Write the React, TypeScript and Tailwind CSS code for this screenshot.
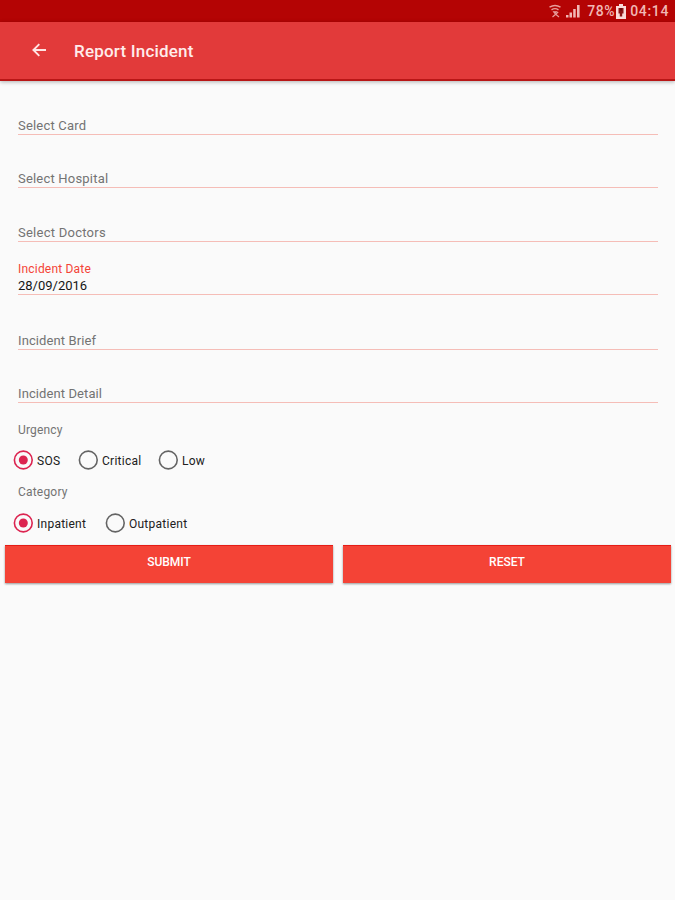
import React from "react";

type FieldProps = { label: string; value?: string; height: string; tracking?: string };

function Field({ label, value, height, tracking = "tracking-[0.2px]" }: FieldProps) {
  return (
    <div className={`flex flex-col justify-end border-b border-[#f5bdb7] ${height}`}>
      {value ? (
        <>
          <span className="text-[12px] leading-[14px] tracking-[0.2px] text-[#f44336]">{label}</span>
          <span className="mt-[2px] mb-[1px] text-[13px] leading-[15px] text-[#151515]">{value}</span>
        </>
      ) : (
        <span className={`mb-[1px] text-[13px] leading-[15px] text-[#737373] ${tracking}`}>{label}</span>
      )}
    </div>
  );
}

function Radio({ label, checked = false, className = "" }: { label: string; checked?: boolean; className?: string }) {
  return (
    <div className={`flex items-center gap-[4px] ${className}`}>
      <svg width="20" height="20" viewBox="0 0 20 20" fill="none" className="shrink-0">
        <circle cx="10.3" cy="10" r="8.9" stroke={checked ? "#dc2450" : "#646464"} strokeWidth="1.6" />
        {checked && <circle cx="10.3" cy="10" r="4.5" fill="#dc2450" />}
      </svg>
      <span className="relative top-[0.5px] text-[12px] leading-[14px] tracking-[0.25px] text-[#202020]">{label}</span>
    </div>
  );
}

function ActionButton({ label }: { label: string }) {
  return (
    <button className="flex h-[38px] flex-1 items-start justify-center border-t border-[#e51c16] bg-[#f44336] pt-[9px] text-[12px] leading-[14px] font-medium text-white shadow-[0_1px_2px_rgba(0,0,0,0.4)]">
      {label}
    </button>
  );
}

export default function App() {
  return (
    <div className="h-[900px] w-[675px] overflow-hidden bg-[#fafafa] font-[Roboto,sans-serif]">
      <div className="flex h-[22px] items-center justify-end bg-[#b40404] pr-[6px] text-[#f1b8b5]">
        <svg width="12" height="16" viewBox="0 0 12 16" fill="none" stroke="currentColor" className="mr-[5px] opacity-85">
          <path d="M.5 4.2Q6 .8 11.5 4.2M2.5 6.8Q6 4.5 9.5 6.8" strokeWidth="1.4" />
          <path d="M4 8.5h4L6 11z" fill="currentColor" strokeWidth=".6" />
          <path d="M3.5 14 9.2 9M7 11.5l3 2.5" strokeWidth="1.2" />
        </svg>
        <svg width="14" height="14" viewBox="0 0 14 14" fill="currentColor" className="mr-[7px]">
          <path d="M0 11h2.5v2.5H0zM3.5 8.5H6v5H3.5zM7.2 5h2.5v8.5H7.2zM11 1h2.6v12.5H11z" />
        </svg>
        <span className="text-[14px] leading-[16px] font-medium tracking-[0.6px]">78%</span>
        <svg width="10" height="15" viewBox="0 0 10 15" className="mr-[4px] ml-[1px]">
          <path d="M3 0h4v2h3v13H0V2h3z" fill="#fadbd8" />
          <path d="M2.5 4h5v5.5H6.2v3H3.8v-3H2.5z" fill="#8d1515" />
          <path d="M4.3 4h1.5v2.5H4.3z" fill="#5d0909" />
        </svg>
        <span className="text-[14px] leading-[16px] font-medium tracking-[0.65px]">04:14</span>
      </div>
      <header className="flex h-[59px] items-center border-b-2 border-[#b91616] bg-[#e23a3a] text-white shadow-[0_1px_4px_rgba(0,0,0,0.3)]">
        <svg width="14" height="14" viewBox="0 0 14 14" fill="none" stroke="#ffe5e3" strokeWidth="1.9" className="mb-[1px] ml-[32px]">
          <path d="M14 7H1.5M7.3 1.1 1.4 7l5.9 5.9" />
        </svg>
        <h1 className="ml-[28px] text-[17px] leading-[20px] font-medium tracking-[0.2px] text-[#ffeceb]">Report Incident</h1>
      </header>
      <main>
        <div className="mr-[17px] ml-[18px]">
          <Field label="Select Card" height="h-[54px]" />
          <Field label="Select Hospital" height="h-[53px]" />
          <Field label="Select Doctors" height="h-[54px]" tracking="tracking-[0.25px]" />
          <Field label="Incident Date" value="28/09/2016" height="h-[53px]" />
          <Field label="Incident Brief" height="h-[55px]" tracking="tracking-[0.1px]" />
          <Field label="Incident Detail" height="h-[53px]" tracking="tracking-[0.1px]" />
        </div>
        <p className="mt-[20px] ml-[18px] text-[12px] leading-[14px] tracking-[0.15px] text-[#737373]">Urgency</p>
        <div className="mt-[13px] ml-[13px] flex">
          <Radio label="SOS" checked className="w-[65px]" />
          <Radio label="Critical" className="w-[80px]" />
          <Radio label="Low" />
        </div>
        <p className="mt-[15px] ml-[18px] text-[12px] leading-[14px] tracking-[0.2px] text-[#737373]">Category</p>
        <div className="mt-[14px] ml-[13px] flex">
          <Radio label="Inpatient" checked className="w-[92px]" />
          <Radio label="Outpatient" />
        </div>
        <div className="mt-[12px] mr-[4px] ml-[5px] flex gap-[10px]">
          <ActionButton label="SUBMIT" />
          <ActionButton label="RESET" />
        </div>
      </main>
    </div>
  );
}
